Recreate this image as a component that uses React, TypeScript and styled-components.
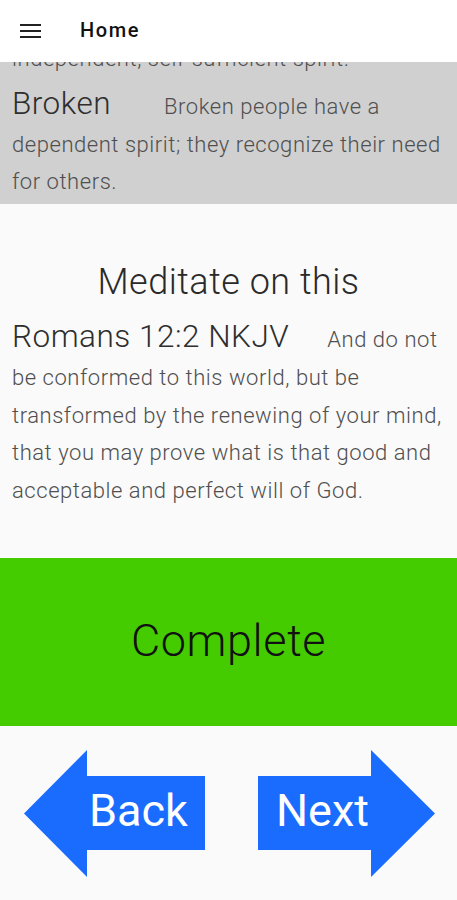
import React from 'react'
import styled, { createGlobalStyle } from 'styled-components'

const GlobalStyle = createGlobalStyle`
  html, body {
    margin: 0;
    padding: 0;
    background: #fafafa;
    font-family: Roboto, "Liberation Sans", sans-serif;
  }
`

const Screen = styled.div`
  width: 457px;
  height: 900px;
  display: flex;
  flex-direction: column;
  background: #fafafa;
  overflow: hidden;
`

const AppBar = styled.header`
  height: 62px;
  flex: none;
  display: flex;
  align-items: center;
  background: #ffffff;
  padding-left: 20px;
`

const MenuButton = styled.div`
  width: 21px;
  display: flex;
  flex-direction: column;
  gap: 4px;
  margin-right: 39px;

  span {
    height: 2px;
    background: #222;
  }
`

const Title = styled.h1`
  margin: 0 0 2px;
  font-size: 20px;
  font-weight: 500;
  letter-spacing: 1.6px;
  color: #111;
`

const Scrolled = styled.section`
  height: 142px;
  flex: none;
  background: #d0d0d0;
  overflow: hidden;
  padding: 0 12px;
`

const Para = styled.p<{ $top?: number }>`
  margin: ${({ $top }) => $top ?? 0}px 0 0;
  font-size: 22px;
  font-weight: 300;
  letter-spacing: 0.55px;
  line-height: 37.5px;
  color: #4f4f4f;
`

const Term = styled.span<{ $gap: number }>`
  font-size: 31.5px;
  line-height: 44px;
  letter-spacing: 0.5px;
  color: #2e2e2e;
  margin-right: ${({ $gap }) => $gap}px;
`

const Meditate = styled.section`
  flex: none;
  padding: 57px 12px 0;
  height: 354px;
  box-sizing: border-box;
`

const Heading = styled.h2`
  margin: 0 0 12px;
  text-align: center;
  font-size: 36px;
  font-weight: 300;
  letter-spacing: 0.5px;
  color: #2a2a2a;
  line-height: 42px;
`

const CompleteBar = styled.button`
  flex: none;
  height: 168px;
  border: none;
  background: #44cc00;
  font-family: inherit;
  font-size: 45px;
  font-weight: 300;
  letter-spacing: 0.6px;
  color: #111;
  padding: 0 0 4px;
`

const NavRow = styled.nav`
  flex: 1;
  display: flex;
  justify-content: space-between;
  align-items: flex-start;
  padding: 24px 22px 0 24px;
`

const ArrowButton = styled.button<{ $w: number }>`
  position: relative;
  width: ${({ $w }) => $w}px;
  height: 127px;
  border: none;
  background: none;
  padding: 0;

  svg {
    position: absolute;
    inset: 0;
  }
`

const ArrowLabel = styled.span<{ $left: number }>`
  position: absolute;
  left: ${({ $left }) => $left}px;
  top: 34px;
  font-family: Roboto, "Liberation Sans", sans-serif;
  font-size: 45px;
  font-weight: 400;
  color: #fff;
`

const BLUE = '#1a6cff'

export default function App() {
  return (
    <>
      <GlobalStyle />
      <Screen>
        <AppBar>
          <MenuButton>
            <span />
            <span />
            <span />
          </MenuButton>
          <Title>Home</Title>
        </AppBar>

        <Scrolled>
          <Para $top={-22}>independent, self-sufficient spirit.</Para>
          <Para $top={4}>
            <Term $gap={53}>Broken</Term>
            Broken people have a dependent spirit; they recognize their need for others.
          </Para>
        </Scrolled>

        <Meditate>
          <Heading>Meditate on this</Heading>
          <Para>
            <Term $gap={38}>Romans 12:2 NKJV</Term>
            And do not be conformed to this world, but be transformed by the renewing of your mind, that you may prove what is that good and acceptable and perfect will of God.
          </Para>
        </Meditate>

        <CompleteBar>Complete</CompleteBar>

        <NavRow>
          <ArrowButton $w={181}>
            <svg width="181" height="127" viewBox="0 0 181 127">
              <polygon fill={BLUE} points="0,63.5 63,0 63,26 181,26 181,100 63,100 63,127" />
            </svg>
            <ArrowLabel $left={65}>Back</ArrowLabel>
          </ArrowButton>
          <ArrowButton $w={177}>
            <svg width="177" height="127" viewBox="0 0 177 127">
              <polygon fill={BLUE} points="0,26 113,26 113,0 177,63.5 113,127 113,100 0,100" />
            </svg>
            <ArrowLabel $left={18}>Next</ArrowLabel>
          </ArrowButton>
        </NavRow>
      </Screen>
    </>
  )
}
